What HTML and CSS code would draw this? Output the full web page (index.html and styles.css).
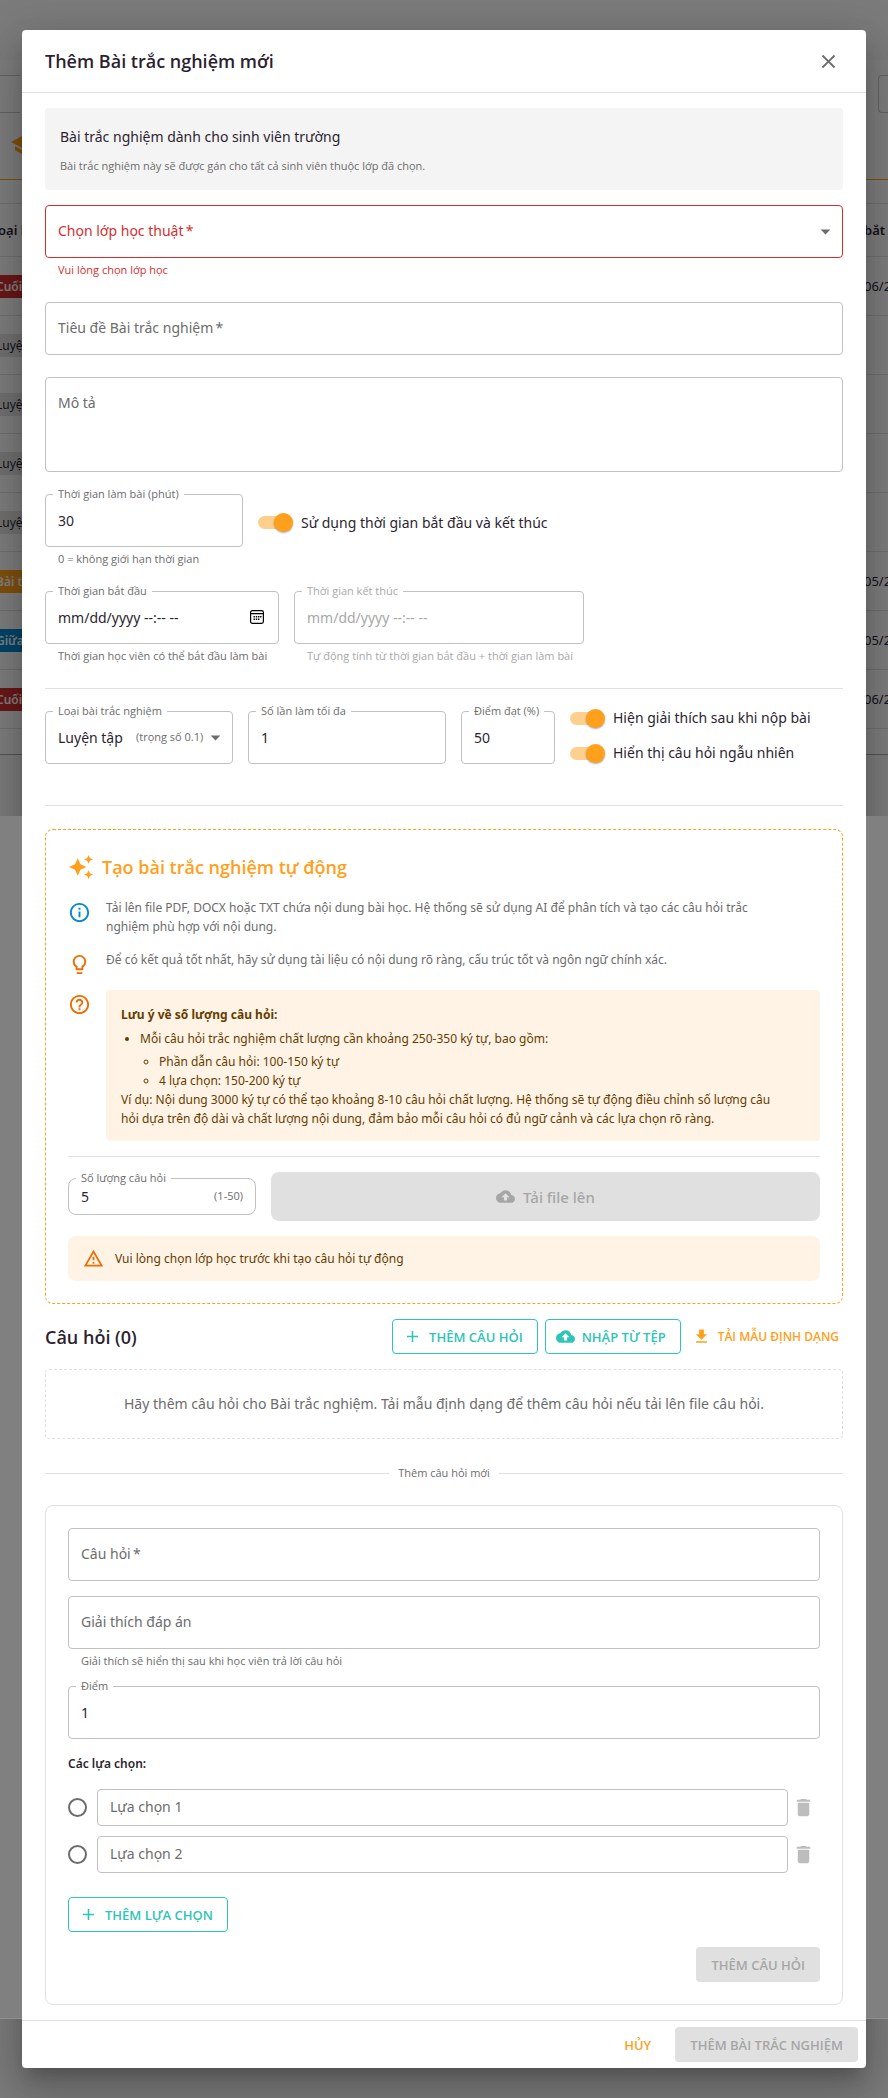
FILE: index.html
```html
<!DOCTYPE html>
<html lang="vi">
<head>
<meta charset="utf-8">
<meta name="viewport" content="width=device-width, initial-scale=1">
<title>Thêm Bài trắc nghiệm mới</title>
<link rel="stylesheet" href="styles.css">
</head>
<body>
<svg class="defs" aria-hidden="true">
  <symbol id="i-close" viewBox="0 0 24 24"><path d="M19 6.41 17.59 5 12 10.59 6.41 5 5 6.41 10.59 12 5 17.59 6.41 19 12 13.41 17.59 19 19 17.59 13.41 12z"/></symbol>
  <symbol id="i-arrow" viewBox="0 0 24 24"><path d="m7 10 5 5 5-5z"/></symbol>
  <symbol id="i-school" viewBox="0 0 24 24"><path d="M5 13.18v4L12 21l7-3.82v-4L12 17l-7-3.82zM12 3 1 9l11 6 9-4.91V17h2V9L12 3z"/></symbol>
  <symbol id="i-spark" viewBox="0 0 24 24"><path d="m19 9 1.25-2.75L23 5l-2.75-1.25L19 1l-1.25 2.75L15 5l2.75 1.25zM19 15l-1.25 2.75L15 19l2.75 1.25L19 23l1.25-2.75L23 19l-2.75-1.25zM11.5 9.5 9 4 6.500 9.500 1 12l5.500 2.500L9 20l2.500-5.500L17 12z"/></symbol>
  <symbol id="i-info" viewBox="0 0 24 24"><path d="M11 7h2v2h-2zm0 4h2v6h-2zm1-9C6.480 2 2 6.480 2 12s4.480 10 10 10 10-4.480 10-10S17.520 2 12 2zm0 18c-4.410 0-8-3.590-8-8s3.590-8 8-8 8 3.590 8 8-3.590 8-8 8z"/></symbol>
  <symbol id="i-bulb" viewBox="0 0 24 24"><path d="M9 21c0 .55.45 1 1 1h4c.55 0 1-.45 1-1v-1H9v1zm3-19C8.140 2 5 5.140 5 9c0 2.380 1.190 4.470 3 5.740V17c0 .55.45 1 1 1h6c.55 0 1-.45 1-1v-2.260c1.810-1.270 3-3.360 3-5.740 0-3.860-3.140-7-7-7zm2.850 11.100-.85.6V16h-4v-2.300l-.85-.6C7.800 12.160 7 10.630 7 9c0-2.760 2.240-5 5-5s5 2.240 5 5c0 1.630-.8 3.160-2.150 4.100z"/></symbol>
  <symbol id="i-help" viewBox="0 0 24 24"><path d="M11 18h2v-2h-2v2zm1-16C6.480 2 2 6.480 2 12s4.480 10 10 10 10-4.480 10-10S17.520 2 12 2zm0 18c-4.410 0-8-3.590-8-8s3.590-8 8-8 8 3.590 8 8-3.590 8-8 8zm0-14c-2.210 0-4 1.790-4 4h2c0-1.100.9-2 2-2s2 .9 2 2c0 2-3 1.750-3 5h2c0-2.250 3-2.500 3-5 0-2.210-1.790-4-4-4z"/></symbol>
  <symbol id="i-cloud" viewBox="0 0 24 24"><path d="M19.350 10.040C18.670 6.590 15.640 4 12 4 9.110 4 6.600 5.640 5.350 8.040 2.340 8.360 0 10.910 0 14c0 3.310 2.690 6 6 6h13c2.760 0 5-2.240 5-5 0-2.640-2.050-4.780-4.650-4.960zM14 13v4h-4v-4H7l5-5 5 5h-3z"/></symbol>
  <symbol id="i-warn" viewBox="0 0 24 24"><path d="M12 5.990 19.530 19H4.470L12 5.990M12 2 1 21h22L12 2zm1 14h-2v2h2v-2zm0-6h-2v4h2v-4z"/></symbol>
  <symbol id="i-plus" viewBox="0 0 24 24"><path d="M19 13h-6v6h-2v-6H5v-2h6V5h2v6h6z"/></symbol>
  <symbol id="i-download" viewBox="0 0 24 24"><path d="M19 9h-4V3H9v6H5l7 7 7-7zM5 18v2h14v-2H5z"/></symbol>
  <symbol id="i-trash" viewBox="0 0 24 24"><path d="M6 19c0 1.100.9 2 2 2h8c1.100 0 2-.9 2-2V7H6v12zM19 4h-3.500l-1-1h-5l-1 1H5v2h14V4z"/></symbol>
  <symbol id="i-calendar" viewBox="0 0 14 14"><rect x=".6" y=".6" width="12.800" height="12.800" rx="1.800" fill="none" stroke="currentColor" stroke-width="1.200"/><path d="M1 3h12v1.200H1zM5.800 6h1.400v1.400H5.800zM8 6h1.400v1.400H8zM10.100 6h1.400v1.400h-1.400zM3.500 8.600h1.400V10H3.500zM5.800 8.600h1.400V10H5.800zM8 8.600h1.400V10H8zM3.500 6h1.400v1.400H3.500z"/></symbol>
</svg>

<div class="page" aria-hidden="true">
  <div class="page-top"></div>
  <div class="page-filters"><span class="filter filter-left"></span><span class="filter filter-right"></span></div>
  <div class="page-tabs"><svg class="tab-icon"><use href="#i-school"/></svg></div>
  <div class="page-gap"></div>
  <div class="page-row page-head"><span>Loại bài</span><span class="row-date">bắt đầu</span></div>
  <div class="page-row"><span class="chip chip-red">Cuối kỳ</span><span class="row-date">06/2025</span></div>
  <div class="page-row"><span class="chip">Luyện tập</span></div>
  <div class="page-row"><span class="chip">Luyện tập</span></div>
  <div class="page-row"><span class="chip">Luyện tập</span></div>
  <div class="page-row"><span class="chip">Luyện tập</span></div>
  <div class="page-row"><span class="chip chip-orange">Bài tập</span><span class="row-date">05/2025</span></div>
  <div class="page-row"><span class="chip chip-blue">Giữa kỳ</span><span class="row-date">05/2025</span></div>
  <div class="page-row"><span class="chip chip-red">Cuối kỳ</span><span class="row-date">06/2025</span></div>
  <div class="page-pager"></div>
</div>

<div class="backdrop">
  <div class="dialog-shadow"></div>
  <div class="page-tail"></div>
  <form class="dialog" role="dialog" aria-labelledby="dialog-title">
    <header class="dialog-head">
      <h2 id="dialog-title" class="heading">Thêm Bài trắc nghiệm mới</h2>
      <button type="button" class="icon-btn" aria-label="Đóng"><svg class="icon"><use href="#i-close"/></svg></button>
    </header>

    <div class="dialog-body">
      <section class="notice">
        <p class="notice-title">Bài trắc nghiệm dành cho sinh viên trường</p>
        <p class="notice-text">Bài trắc nghiệm này sẽ được gán cho tất cả sinh viên thuộc lớp đã chọn.</p>
      </section>

      <div class="stack">
        <div class="field field-error">
          <label class="label" for="class">Chọn lớp học thuật&thinsp;*</label>
          <select id="class" class="control"><option></option></select>
          <svg class="icon arrow"><use href="#i-arrow"/></svg>
          <p class="helper">Vui lòng chọn lớp học</p>
        </div>
        <div class="field">
          <label class="label" for="title">Tiêu đề Bài trắc nghiệm&thinsp;*</label>
          <input id="title" class="control" type="text">
        </div>
        <div class="field">
          <label class="label" for="desc">Mô tả</label>
          <textarea id="desc" class="control control-area"></textarea>
        </div>
        <div class="row">
          <div class="field w-md">
            <label class="label label-up" for="duration">Thời gian làm bài (phút)</label>
            <input id="duration" class="control" type="number" value="30">
            <p class="helper">0 = không giới hạn thời gian</p>
          </div>
          <label class="switch switch-field"><input type="checkbox" checked>Sử dụng thời gian bắt đầu và kết thúc</label>
        </div>
        <div class="row">
          <div class="field w-start">
            <label class="label label-up" for="start">Thời gian bắt đầu</label>
            <input id="start" class="control" type="text" placeholder="mm/dd/yyyy --:-- --">
            <button type="button" class="picker" aria-label="Chọn thời gian"><svg class="picker-icon"><use href="#i-calendar"/></svg></button>
            <p class="helper">Thời gian học viên có thể bắt đầu làm bài</p>
          </div>
          <div class="field field-disabled w-end">
            <label class="label label-up" for="end">Thời gian kết thúc</label>
            <input id="end" class="control" type="text" placeholder="mm/dd/yyyy --:-- --" disabled>
            <p class="helper">Tự động tính từ thời gian bắt đầu + thời gian làm bài</p>
          </div>
        </div>
        <hr class="rule">
        <div class="row row-settings">
          <div class="field w-type">
            <label class="label label-up" for="type">Loại bài trắc nghiệm</label>
            <select id="type" class="control"><option>Luyện tập</option></select>
            <span class="note note-weight">(trọng số 0.1)</span>
            <svg class="icon arrow"><use href="#i-arrow"/></svg>
          </div>
          <div class="field w-md">
            <label class="label label-up" for="tries">Số lần làm tối đa</label>
            <input id="tries" class="control" type="number" value="1">
          </div>
          <div class="field w-pass">
            <label class="label label-up" for="pass">Điểm đạt (%)</label>
            <input id="pass" class="control" type="number" value="50">
          </div>
          <div class="switches">
            <label class="switch"><input type="checkbox" checked>Hiện giải thích sau khi nộp bài</label>
            <label class="switch"><input type="checkbox" checked>Hiển thị câu hỏi ngẫu nhiên</label>
          </div>
        </div>
        <hr class="rule">
      </div>

      <section class="auto">
        <h3 class="auto-title"><svg class="icon icon-lg"><use href="#i-spark"/></svg>Tạo bài trắc nghiệm tự động</h3>
        <div class="tips">
          <div class="tip"><svg class="icon blue"><use href="#i-info"/></svg><p class="tip-text">Tải lên file PDF, DOCX hoặc TXT chứa nội dung bài học. Hệ thống sẽ sử dụng AI để phân tích và tạo các câu hỏi trắc nghiệm phù hợp với nội dung.</p></div>
          <div class="tip"><svg class="icon orange"><use href="#i-bulb"/></svg><p class="tip-text">Để có kết quả tốt nhất, hãy sử dụng tài liệu có nội dung rõ ràng, cấu trúc tốt và ngôn ngữ chính xác.</p></div>
          <div class="tip"><svg class="icon orange"><use href="#i-help"/></svg>
            <div class="advice">
              <strong>Lưu ý về số lượng câu hỏi:</strong>
              <ul>
                <li>Mỗi câu hỏi trắc nghiệm chất lượng cần khoảng 250-350 ký tự, bao gồm:
                  <ul><li>Phần dẫn câu hỏi: 100-150 ký tự</li><li>4 lựa chọn: 150-200 ký tự</li></ul>
                </li>
              </ul>
              <p class="example">Ví dụ: Nội dung 3000 ký tự có thể tạo khoảng 8-10 câu hỏi chất lượng. Hệ thống sẽ tự động điều chỉnh số lượng câu hỏi dựa trên độ dài và chất lượng nội dung, đảm bảo mỗi câu hỏi có đủ ngữ cảnh và các lựa chọn rõ ràng.</p>
            </div>
          </div>
        </div>
        <hr class="rule">
        <div class="row row-upload">
          <div class="field field-small field-round w-type">
            <label class="label label-up" for="count">Số lượng câu hỏi</label>
            <input id="count" class="control" type="number" value="5">
            <span class="note note-end">(1-50)</span>
          </div>
          <button type="button" class="upload" disabled><svg class="icon icon-sm"><use href="#i-cloud"/></svg>Tải file lên</button>
        </div>
        <div class="alert"><svg class="icon icon-md orange"><use href="#i-warn"/></svg>Vui lòng chọn lớp học trước khi tạo câu hỏi tự động</div>
      </section>

      <div class="questions-head">
        <h3 class="heading">Câu hỏi (0)</h3>
        <div class="actions">
          <button type="button" class="btn btn-outline"><svg class="icon icon-sm"><use href="#i-plus"/></svg>THÊM CÂU HỎI</button>
          <button type="button" class="btn btn-outline"><svg class="icon icon-sm"><use href="#i-cloud"/></svg>NHẬP TỪ TỆP</button>
          <button type="button" class="btn btn-text btn-download"><svg class="icon icon-sm"><use href="#i-download"/></svg>TẢI MẪU ĐỊNH DẠNG</button>
        </div>
      </div>
      <p class="empty">Hãy thêm câu hỏi cho Bài trắc nghiệm. Tải mẫu định dạng để thêm câu hỏi nếu tải lên file câu hỏi.</p>
      <div class="split">Thêm câu hỏi mới</div>

      <section class="new-question">
        <div class="field">
          <label class="label" for="question">Câu hỏi&thinsp;*</label>
          <input id="question" class="control" type="text">
        </div>
        <div class="field">
          <label class="label" for="explain">Giải thích đáp án</label>
          <input id="explain" class="control" type="text">
          <p class="helper">Giải thích sẽ hiển thị sau khi học viên trả lời câu hỏi</p>
        </div>
        <div class="field">
          <label class="label label-up" for="points">Điểm</label>
          <input id="points" class="control" type="number" value="1">
        </div>
        <h4 class="options-title">Các lựa chọn:</h4>
        <div class="options">
          <div class="option">
            <input type="radio" name="answer" class="radio" aria-label="Đáp án 1">
            <div class="field field-small"><label class="label" for="opt1">Lựa chọn 1</label><input id="opt1" class="control" type="text"></div>
            <button type="button" class="icon-btn trash" disabled aria-label="Xóa lựa chọn 1"><svg class="icon"><use href="#i-trash"/></svg></button>
          </div>
          <div class="option">
            <input type="radio" name="answer" class="radio" aria-label="Đáp án 2">
            <div class="field field-small"><label class="label" for="opt2">Lựa chọn 2</label><input id="opt2" class="control" type="text"></div>
            <button type="button" class="icon-btn trash" disabled aria-label="Xóa lựa chọn 2"><svg class="icon"><use href="#i-trash"/></svg></button>
          </div>
        </div>
        <button type="button" class="btn btn-outline btn-add"><svg class="icon icon-sm"><use href="#i-plus"/></svg>THÊM LỰA CHỌN</button>
        <button type="button" class="btn btn-off btn-submit" disabled>THÊM CÂU HỎI</button>
      </section>
    </div>

    <footer class="dialog-foot">
      <button type="button" class="btn btn-text btn-cancel">HỦY</button>
      <button type="submit" class="btn btn-off" disabled>THÊM BÀI TRẮC NGHIỆM</button>
    </footer>
  </form>
</div>
</body>
</html>
```

FILE: styles.css
```css
* { box-sizing: border-box; }
body {
  margin: 0;
  position: relative;
  background: #fff;
  color: #2d1f30;
  font: 14px/20px "Noto Sans", "Open Sans", sans-serif;
}
h2, h3, h4, p, ul { margin: 0; padding: 0; font-weight: 400; }
button, input, select, textarea { font: inherit; color: inherit; }
.defs { position: absolute; width: 0; height: 0; }
.icon { width: 23px; height: 23px; flex: none; fill: currentColor; }
.icon-lg { width: 26px; height: 26px; }
.icon-md { width: 21px; height: 21px; }
.icon-sm { width: 19px; height: 19px; }
.blue { color: #0288d1; }
.orange { color: #ef6c00; }

/* Headings, captions and buttons share the narrower family */
.heading, .auto-title, .notice-text, .label-up, .helper, .note, .btn, .split {
  font-family: "Open Sans", "Noto Sans", sans-serif;
}

/* Page behind the dialog */
.page { position: absolute; inset: 0; overflow: hidden; background: #f7f7f7; }
.page-top { height: 60px; }
.page-filters {
  display: flex;
  justify-content: space-between;
  height: 68px;
  padding-top: 15px;
  background: #fbfbfb;
}
.filter { width: 20px; height: 38px; border: 1px solid #c4c4c4; border-width: 1px 0; }
.filter-right { width: 10px; border-left-width: 1px; border-radius: 4px 0 0 4px; }
.page-tabs { height: 52px; padding: 5px 10px; border-bottom: 1px solid #ffa01c; background: #fbfbfb; }
.tab-icon { width: 24px; height: 24px; fill: #ffa01c; }
.page-gap { height: 24px; border-bottom: 1px solid #dcdcdc; background: #fbfbfb; }
.page-row {
  display: flex;
  align-items: center;
  justify-content: space-between;
  height: 59px;
  margin-left: -12px;
  padding-left: 3px;
  border-bottom: 1px solid #dcdcdc;
  background: #fbfbfb;
  font-size: 13px;
  white-space: nowrap;
}
.page-head { height: 53px; font-weight: 600; }
.row-date { width: 24px; }
.chip { margin-left: -3px; padding: 2px 8px; background: #e0e0e0; font-size: 12px; line-height: 19px; }
.chip-red { background: #d32f2f; color: #fff; font-weight: 600; }
.chip-orange { background: #ffa01c; color: #fff; font-weight: 600; }
.chip-blue { background: #0288d1; color: #fff; font-weight: 600; }
.page-pager { height: 26px; border-bottom: 1px solid #a8a8a8; background: #fbfbfb; }

/* Dialog frame */
.backdrop { position: relative; min-height: 100vh; padding: 30px 22px; background: rgba(0, 0, 0, .5); overflow: hidden; }
.dialog-shadow {
  position: absolute;
  inset: 30px 22px;
  border-radius: 4px;
  box-shadow: 0 11px 15px -7px rgba(0, 0, 0, .2), 0 24px 38px 3px rgba(0, 0, 0, .14), 0 9px 46px 8px rgba(0, 0, 0, .12);
}
.page-tail { position: absolute; inset: 816px 0 79px; background: #808080; border-bottom: 1px solid #8f8f8f; }
.dialog { position: relative; border-radius: 4px; background: #fff; }
.dialog-head {
  display: flex;
  align-items: center;
  justify-content: space-between;
  height: 63px;
  padding: 0 22px 0 23px;
  border-bottom: 1px solid #e0e0e0;
}
.heading { font-size: 18px; line-height: 28px; font-weight: 600; }
.icon-btn { display: flex; padding: 4px; border: 0; background: none; color: #6c6c6c; }
.dialog-body { padding: 15px 23px; }
.dialog-foot {
  display: flex;
  justify-content: flex-end;
  gap: 8px;
  padding: 6px 8px;
  border-top: 1px solid #e0e0e0;
}

.notice { padding: 15px 15px 14px; border-radius: 4px; background: #f4f4f4; }
.notice-title { line-height: 28px; }
.notice-text { margin-top: 5px; color: #6c6c6c; font-size: 11px; line-height: 20px; }

/* Fields */
.stack { display: flex; flex-direction: column; gap: 22px; margin-top: 15px; }
.row { display: flex; gap: 15px; }
.rule { width: 100%; height: 1px; margin: 0; border: 0; background: #e0e0e0; }
.field { position: relative; min-width: 0; }
.control {
  display: block;
  width: 100%;
  height: 53px;
  margin: 0;
  padding: 0 12px;
  border: 1px solid #c1c1c1;
  border-radius: 4px;
  background: #fff;
  appearance: none;
  outline: 0;
}
.control::placeholder { color: inherit; }
.control-area { height: 95px; padding: 15px 12px; resize: none; }
.label { position: absolute; top: 16px; left: 13px; color: #6c6c6c; }
.label-up { top: -8px; left: 8px; padding: 0 5px; background: #fff; font-size: 11px; line-height: 16px; }
.helper { margin: 2px 13px 1px; color: #6c6c6c; font-size: 11px; line-height: 19px; white-space: nowrap; }
.arrow { position: absolute; top: 15px; right: 6px; color: #6c6c6c; pointer-events: none; }
.picker { position: absolute; top: 15px; right: 11px; display: flex; padding: 4px; border: 0; background: none; color: #000; }
.picker-icon { width: 14px; height: 14px; fill: currentColor; }
.field-error .control { border-color: #d32f2f; }
.field-error .label, .field-error .helper { color: #d32f2f; }
.field-disabled .control, .field-disabled .label, .field-disabled .helper { color: #a8a8a8; }
.field-small .control { height: 37px; }
.field-small .label { top: 8px; }
.field-small .label-up { top: -8px; }
.field-round .control { border-radius: 8px; }
input[type="number"]::-webkit-inner-spin-button { appearance: none; }
.note { position: absolute; color: #6c6c6c; font-size: 11px; pointer-events: none; }
.note-weight { top: 16px; left: 91px; }
.note-end { top: 8px; right: 13px; }
.w-md { width: 198px; }
.w-start { width: 234px; }
.w-end { width: 290px; }
.w-type { width: 188px; }
.w-pass { width: 94px; }
.row-settings { height: 94px; margin-bottom: -22px; }

.switch { display: flex; align-items: center; gap: 8px; }
.switch-field { height: 57px; }
.switch input { position: relative; width: 35px; height: 19px; margin: 0; appearance: none; }
.switch input::before {
  content: "";
  position: absolute;
  inset: 3px 2px 3px 0;
  border-radius: 8px;
  background: #ffcf8d;
}
.switch input::after {
  content: "";
  position: absolute;
  top: 0;
  right: 0;
  width: 19px;
  height: 19px;
  border-radius: 50%;
  background: #ffa01c;
  box-shadow: 0 1px 2px rgba(0, 0, 0, .35);
}
.switches { display: flex; flex-direction: column; gap: 15px; margin-top: -3px; }

/* Automatic generation */
.auto { margin-top: 23px; padding: 22px; border: 1px dashed #ffa01c; border-radius: 8px; }
.auto-title {
  display: flex;
  align-items: center;
  gap: 8px;
  margin-bottom: 16px;
  color: #ffa01c;
  font-size: 18px;
  line-height: 30px;
  font-weight: 600;
}
.tips { display: flex; flex-direction: column; gap: 14px; margin-bottom: 15px; color: #6c6c6c; font-size: 12px; line-height: 19px; }
.tip { display: flex; gap: 15px; }
.tip .icon { margin-top: 3px; }
.tip-text { padding-right: 35px; }
.advice { flex: 1; padding: 15px 15px 13px; border-radius: 4px; background: #fff3e6; color: #663c00; }
.advice strong { font-weight: 700; }
.advice ul { margin-top: 5px; padding-left: 19px; }
.advice ul ul { margin-top: 4px; }
.example { padding-right: 24px; }
.row-upload { align-items: center; margin: 15px 0; }
.upload {
  display: flex;
  flex: 1;
  align-items: center;
  justify-content: center;
  gap: 8px;
  height: 49px;
  border: 0;
  border-radius: 8px;
  background: #e0e0e0;
  color: #a6a6a6;
  font-size: 15px;
  font-weight: 500;
}
.alert {
  display: flex;
  align-items: center;
  gap: 11px;
  height: 45px;
  padding: 0 15px;
  border-radius: 8px;
  background: #fff3e6;
  color: #663c00;
  font-size: 12px;
}

/* Questions */
.questions-head { display: flex; align-items: center; justify-content: space-between; margin-top: 15px; }
.actions { display: flex; gap: 7px; }
.btn {
  display: inline-flex;
  align-items: center;
  gap: 7px;
  height: 35px;
  padding: 0 15px;
  border: 0;
  border-radius: 4px;
  background: none;
  font-size: 13px;
  font-weight: 600;
}
.btn-outline { padding: 0 14px 0 10px; border: 1px solid #2ec4b6; color: #2ec4b6; }
.btn-text { padding: 0 4px; color: #ffa01c; }
.btn-download { font-size: 12px; }
.btn-cancel { padding: 0 16px; }
.btn-off { background: #e0e0e0; color: #a6a6a6; }
.empty {
  margin-top: 15px;
  padding: 24px;
  border: 1px dashed #e0e0e0;
  border-radius: 4px;
  color: #6c6c6c;
  text-align: center;
}
.split { display: flex; align-items: center; gap: 9px; margin: 24px 0 22px; color: #6c6c6c; font-size: 11px; }
.split::before, .split::after { content: ""; flex: 1; height: 1px; background: #e0e0e0; }
.new-question {
  display: flex;
  flex-direction: column;
  gap: 15px;
  padding: 22px;
  border: 1px solid #e0e0e0;
  border-radius: 8px;
}
.options-title { font-size: 12px; line-height: 20px; font-weight: 600; }
.options { display: flex; flex-direction: column; gap: 10px; }
.option { display: flex; align-items: center; }
.option .field { flex: 1; margin-left: 10px; }
.radio { width: 19px; height: 19px; margin: 0; border: 2px solid #6c6c6c; border-radius: 50%; appearance: none; }
.trash { margin-right: 1px; color: #bdbdbd; }
.btn-add { align-self: flex-start; margin-top: 9px; }
.btn-submit { align-self: flex-end; }
```
